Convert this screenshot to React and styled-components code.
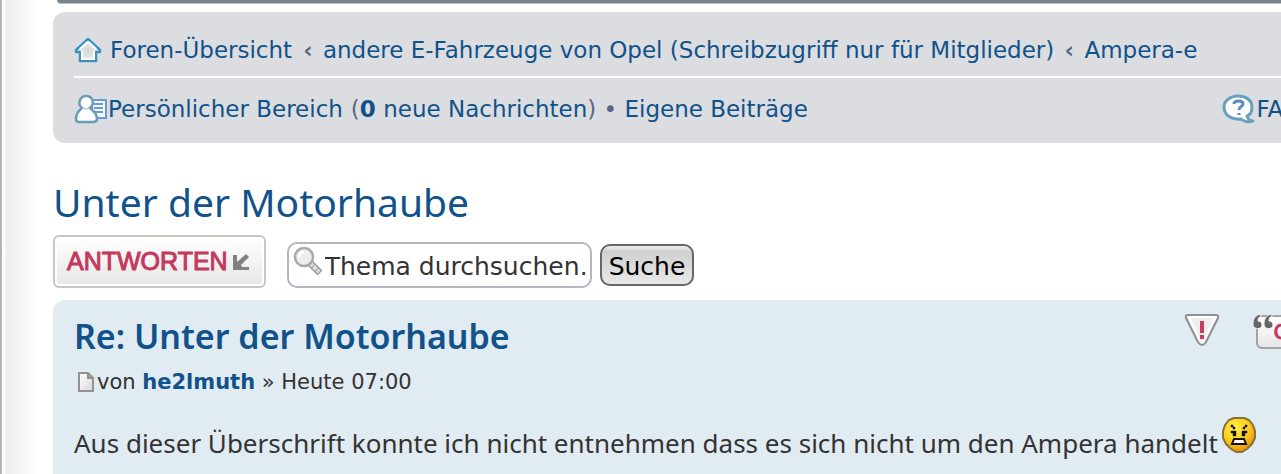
import React, { useState } from "react";
import styled, { createGlobalStyle } from "styled-components";

function HomeIcon() {
  return (
    <svg width="28" height="26" viewBox="0 0 28 26" aria-hidden="true">
      <defs>
        <radialGradient id="home" cx="50%" cy="55%" r="60%">
          <stop offset="0" stopColor="#d6d6d8" />
          <stop offset="0.500" stopColor="#e4e4e5" />
          <stop offset="1" stopColor="#ffffff" />
        </radialGradient>
      </defs>
      <path
        d="M14 2 L26 13 V15 H22 V24 H6 V15 H2 V13 Z"
        fill="url(#home)"
        stroke="#3a93bf"
        strokeWidth="2.500"
        strokeLinejoin="round"
      />
      <path
        d="M14 4.500 L22 12 M14 4.500 L6 12 M8 14 V22 H20 V14"
        fill="none"
        stroke="#ffffff"
        strokeWidth="2"
      />
    </svg>
  );
}

function UserIcon() {
  return (
    <svg width="34" height="30" viewBox="0 0 34 30" aria-hidden="true">
      <path d="M18 6 H32 V24 H18 Z" fill="#f4f9ff" stroke="#6b9ad6" strokeWidth="2" />
      <path d="M20 10 H29 M20 14 H29 M20 18 H29" stroke="#6a9bd6" strokeWidth="2" />
      <path
        d="M8 14 C3 10 6 2 12 2 C19 2 21 10 16 14 C20 17 23 21 23 25 Q23 28 19 28 H5 Q2 28 2 25 C2 21 4 17 8 14 Z"
        fill="#ffffff"
        stroke="#6a9db8"
        strokeWidth="2.500"
      />
      <path d="M8 14 Q12 16 16 14" fill="none" stroke="#9fbfcf" strokeWidth="1" />
    </svg>
  );
}

function FaqIcon() {
  return (
    <svg width="34" height="30" viewBox="0 0 34 30" aria-hidden="true">
      <path
        d="M16 2 C25 2 30 7 30 13 C30 18 28 21 25 22 C26 25 28 27 31 27 C27 29 21 27 19 25 C9 26 2 21 2 13 C2 7 8 2 16 2 Z"
        fill="#ffffff"
        stroke="#6aa0bc"
        strokeWidth="3"
        strokeLinejoin="round"
      />
      <path
        d="M12 10 C12 6 21 6 21 10 C21 13 17 12 17 16 M17 19 V21"
        fill="none"
        stroke="#5a8cc4"
        strokeWidth="3"
      />
    </svg>
  );
}

function ReplyArrow() {
  return (
    <svg width="18" height="18" viewBox="0 0 18 18" aria-hidden="true">
      <path d="M1 2 H5 V9 L14 1 L17 4 L9 12 L10 14 H17 V17 H1 Z" fill="#808080" />
    </svg>
  );
}

function SearchIcon() {
  return (
    <svg width="30" height="30" viewBox="0 0 30 30" aria-hidden="true">
      <path d="M16 15 L27 26" stroke="#a0a0a0" strokeWidth="7" />
      <path d="M17 16 L26 25" stroke="#dddddd" strokeWidth="4" strokeDasharray="4 1" />
      <circle cx="11" cy="10" r="9" fill="#ededed" stroke="#a8a8a8" strokeWidth="2.500" />
      <path d="M6 10 A5 5 0 0 1 11 5" fill="none" stroke="#ffffff" strokeWidth="3" />
    </svg>
  );
}

function PageIcon() {
  return (
    <svg width="16" height="20" viewBox="0 0 16 20" aria-hidden="true">
      <defs>
        <linearGradient id="page" x1="0" y1="0" x2="1" y2="1">
          <stop offset="0" stopColor="#ffffff" />
          <stop offset="1" stopColor="#d8d8d8" />
        </linearGradient>
      </defs>
      <path d="M1 1 H10 L15 6 V19 H1 Z" fill="url(#page)" stroke="#929292" strokeWidth="2" />
      <path d="M10 1 V6 H15" fill="#a0a0a0" stroke="#929292" strokeWidth="2" />
    </svg>
  );
}

function ReportIcon() {
  return (
    <svg width="36" height="34" viewBox="0 0 36 34" aria-hidden="true">
      <path
        d="M4 2 H32 Q35 2 34 5 L22 29 Q18 35 14 29 L2 5 Q1 2 4 2 Z"
        fill="#eeeeee"
        stroke="#8e9093"
        strokeWidth="2"
      />
      <path
        d="M5 4 H31 L20 28 Q18 31 16 28 Z"
        fill="none"
        stroke="#ffffff"
        strokeWidth="2"
      />
      <path d="M16 8 H20 V20 H16 Z M16 22 H20 V26 H16 Z" fill="#cc3a5e" />
    </svg>
  );
}

function QuoteMarks() {
  return (
    <svg width="22" height="18" viewBox="0 0 22 18" aria-hidden="true">
      <g fill="#666666" stroke="#f6f8f9" strokeWidth="1">
        <path d="M9 1 C3 2 1 6 1 11 C1 17 10 17 10 12 C10 9 8 8 6 8 C6 5 7 4 9 3 Z" />
        <path d="M20 1 C14 2 12 6 12 11 C12 17 21 17 21 12 C21 9 19 8 17 8 C17 5 18 4 20 3 Z" />
      </g>
    </svg>
  );
}

function AngrySmiley() {
  return (
    <svg width="34" height="38" viewBox="0 0 34 38" role="img" aria-label="Böse">
      <defs>
        <radialGradient id="angry" cx="38%" cy="30%" r="75%">
          <stop offset="0" stopColor="#fff04a" />
          <stop offset="0.550" stopColor="#ffcc1c" />
          <stop offset="1" stopColor="#e08a08" />
        </radialGradient>
      </defs>
      <path
        d="M12 2 H22 L27 4 L31 9 L33 15 V22 L30 28 L25 33 L20 36 H14 L9 33 L4 28 L1 22 V15 L3 9 L7 4 Z"
        fill="url(#angry)"
        stroke="#857338"
        strokeWidth="2"
        strokeLinejoin="round"
      />
      <path
        d="M9 9 H11 V11 H13 V13 H11 V11 H9 Z M25 9 H23 V11 H21 V13 H23 V11 H25 Z M9 15 H14 V20 H11 V17 H9 Z M25 15 H20 V20 H23 V17 H25 Z"
        fill="#171200"
        stroke="#171200"
        strokeWidth="0.500"
      />
      <path d="M12 23 H22 L24 28 H10 Z" fill="#ffffff" stroke="#171200" strokeWidth="2" />
    </svg>
  );
}

function App() {
  const [query, setQuery] = useState("");

  return (
    <>
      <GlobalStyle />
      <Page>
        <Content>
          <HeaderEdge />

          <NavBar>
            <NavRow>
              <HomeLink href="#index">
                <HomeIcon />
                Foren-Übersicht
              </HomeLink>
              <span>
                <Mark>‹</Mark>{" "}
                <NavLink href="#opel">
                  andere E-Fahrzeuge von Opel (Schreibzugriff nur für Mitglieder)
                </NavLink>{" "}
                <Mark>‹</Mark> <NavLink href="#ampera">Ampera-e</NavLink>
              </span>
            </NavRow>
            <NavRow $divided>
              <IconLink href="#ucp">
                <UserIcon />
                Persönlicher Bereich
              </IconLink>
              <span>
                (
                <NavLink href="#messages">
                  <strong>0</strong> neue Nachrichten
                </NavLink>
                ) • <NavLink href="#own">Eigene Beiträge</NavLink>
              </span>
              <FaqLink href="#faq">
                <FaqIcon />
                FAQ
              </FaqLink>
            </NavRow>
          </NavBar>

          <Title>
            <NavLink href="#topic">Unter der Motorhaube</NavLink>
          </Title>

          <Actions onSubmit={(e) => e.preventDefault()}>
            <ReplyButton type="button">
              ANTWORTEN
              <ReplyArrow />
            </ReplyButton>
            <SearchBox>
              <SearchIcon />
              <SearchInput
                aria-label="Thema durchsuchen"
                placeholder="Thema durchsuchen…"
                value={query}
                onChange={(e) => setQuery(e.target.value)}
              />
            </SearchBox>
            <SearchButton type="submit">Suche</SearchButton>
          </Actions>

          <Post>
            <PostHeader>
              <PostTitle>
                <NavLink href="#post">Re: Unter der Motorhaube</NavLink>
              </PostTitle>
              <PostButtons>
                <IconButton type="button" aria-label="Beitrag melden">
                  <ReportIcon />
                </IconButton>
                <QuoteButton type="button">
                  <QuoteMarks />
                  <QuoteLabel>QUOTE</QuoteLabel>
                </QuoteButton>
              </PostButtons>
            </PostHeader>
            <Author>
              <PageIcon />
              <span>
                von{" "}
                <NavLink href="#author">
                  <strong>he2lmuth</strong>
                </NavLink>{" "}
                » Heute 07:00
              </span>
            </Author>
            <Message>
              Aus dieser Überschrift konnte ich nicht entnehmen dass es sich nicht um den Ampera handelt
              <AngrySmiley />
            </Message>
          </Post>
        </Content>
      </Page>
    </>
  );
}

const GlobalStyle = createGlobalStyle`
  * {
    box-sizing: border-box;
  }

  body {
    margin: 0;
    background: #ffffff;
    color: #333333;
    font-family: Verdana, "DejaVu Sans", sans-serif;
  }

  svg {
    display: block;
    flex-shrink: 0;
  }
`;

const Page = styled.div`
  min-height: 100vh;
  padding-left: 53px;
  overflow: hidden;
  background: linear-gradient(
    to right,
    #a8a8a8 0,
    #c4c4c4 2px,
    #ffffff 2px,
    #ffffff 5px,
    #ececec 6px,
    #f7f7f7 22px,
    #ffffff 40px
  );
`;

const Content = styled.main`
  margin-right: -102px;
`;

const HeaderEdge = styled.div`
  height: 4px;
  margin-left: 4px;
  border-bottom: 1px solid #b9c0c8;
  border-bottom-left-radius: 8px;
  background: #78838f;
`;

const NavBar = styled.nav`
  margin-top: 8px;
  padding: 8px 82px 4px 21px;
  border-radius: 12px;
  background: #dcdde1;
  color: #5c6684;
  font-size: 23px;
`;

const NavRow = styled.div`
  display: flex;
  align-items: center;
  gap: 8px;
  height: ${(props) => (props.$divided ? "63px" : "56px")};
  padding-top: ${(props) => (props.$divided ? "0" : "3px")};
  border-top: ${(props) => (props.$divided ? "2px solid #ffffff" : "none")};
  white-space: nowrap;
`;

const NavLink = styled.a`
  color: #105289;
  text-decoration: none;
`;

const IconLink = styled(NavLink)`
  display: flex;
  align-items: center;
`;

const HomeLink = styled(IconLink)`
  gap: 8px;
`;

const FaqLink = styled(IconLink)`
  margin-left: auto;
`;

const Mark = styled.strong`
  margin: 0 3px;
  color: #5c6684;
`;

const Title = styled.h2`
  margin: 31px 0 5px;
  font-family: "Trebuchet MS", "Noto Sans", sans-serif;
  font-size: 39px;
  font-weight: 400;
  line-height: 56px;
`;

const Actions = styled.form`
  display: flex;
  align-items: center;
  height: 53px;
`;

const ReplyButton = styled.button`
  display: flex;
  align-items: center;
  gap: 4px;
  height: 53px;
  margin-right: 21px;
  padding: 0 14px 0 12px;
  border: 2px solid #c9c5c0;
  border-radius: 6px;
  background: linear-gradient(#ffffff, #e6e6e6);
  box-shadow: inset 0 0 0 2px #ffffff;
  color: #c5395c;
  font-family: "Liberation Sans", sans-serif;
  font-size: 25px;
  -webkit-text-stroke: 1px #c5395c;
`;

const SearchBox = styled.div`
  display: flex;
  align-items: center;
  width: 305px;
  height: 46px;
  margin-right: 8px;
  margin-top: 6px;
  padding: 0 4px;
  border: 2px solid #b4b7c2;
  border-radius: 10px;
  background: #ffffff;

  svg {
    margin-bottom: 6px;
  }
`;

const SearchInput = styled.input`
  flex: 1;
  min-width: 0;
  padding: 4px 0 0 2px;
  border: none;
  outline: none;
  background: transparent;
  color: #333333;
  font-family: inherit;
  font-size: 25px;

  &::placeholder {
    color: #333333;
    opacity: 1;
  }
`;

const SearchButton = styled.button`
  height: 42px;
  margin-top: 6px;
  padding: 4px 7px 0;
  border: 2px solid #666666;
  border-radius: 10px;
  background: linear-gradient(#efefef 0, #d0d0d0 15%, #e8e8e8);
  color: #000000;
  font-family: inherit;
  font-size: 25px;
`;

const Post = styled.article`
  margin-top: 12px;
  padding: 12px 21px 24px;
  border-radius: 12px;
  background: #e1ebf2;
`;

const PostHeader = styled.header`
  display: flex;
  justify-content: space-between;
`;

const PostTitle = styled.h3`
  margin: 0;
  font-family: "Trebuchet MS", "Noto Sans", sans-serif;
  font-size: 34px;
  font-weight: 600;
  line-height: 48px;
`;

const PostButtons = styled.div`
  display: flex;
  align-items: flex-start;
  gap: 32px;
  padding-top: 1px;
`;

const IconButton = styled.button`
  padding: 0;
  border: none;
  background: none;
`;

const QuoteButton = styled(IconButton)`
  display: flex;
  align-items: flex-start;

  svg {
    z-index: 1;
  }
`;

const QuoteLabel = styled.span`
  margin: 2px 0 0 -18px;
  padding: 4px 8px 4px 16px;
  border: 2px solid #a0a3a8;
  border-radius: 6px;
  background: linear-gradient(#ffffff, #e6e6e6);
  color: #c5395c;
  font-family: "Liberation Sans", sans-serif;
  font-size: 22px;
  line-height: 22px;
  -webkit-text-stroke: 1px #c5395c;
`;

const Author = styled.p`
  display: flex;
  align-items: center;
  gap: 3px;
  margin: 8px 0 0 4px;
  font-size: 21px;
  line-height: 28px;
`;

const Message = styled.p`
  display: flex;
  align-items: center;
  gap: 4px;
  margin: 20px 0 0;
  font-family: "Trebuchet MS", "Noto Sans", sans-serif;
  font-size: 26px;
  line-height: 54px;
  white-space: nowrap;

  svg {
    margin-bottom: 16px;
  }
`;

export default App;
